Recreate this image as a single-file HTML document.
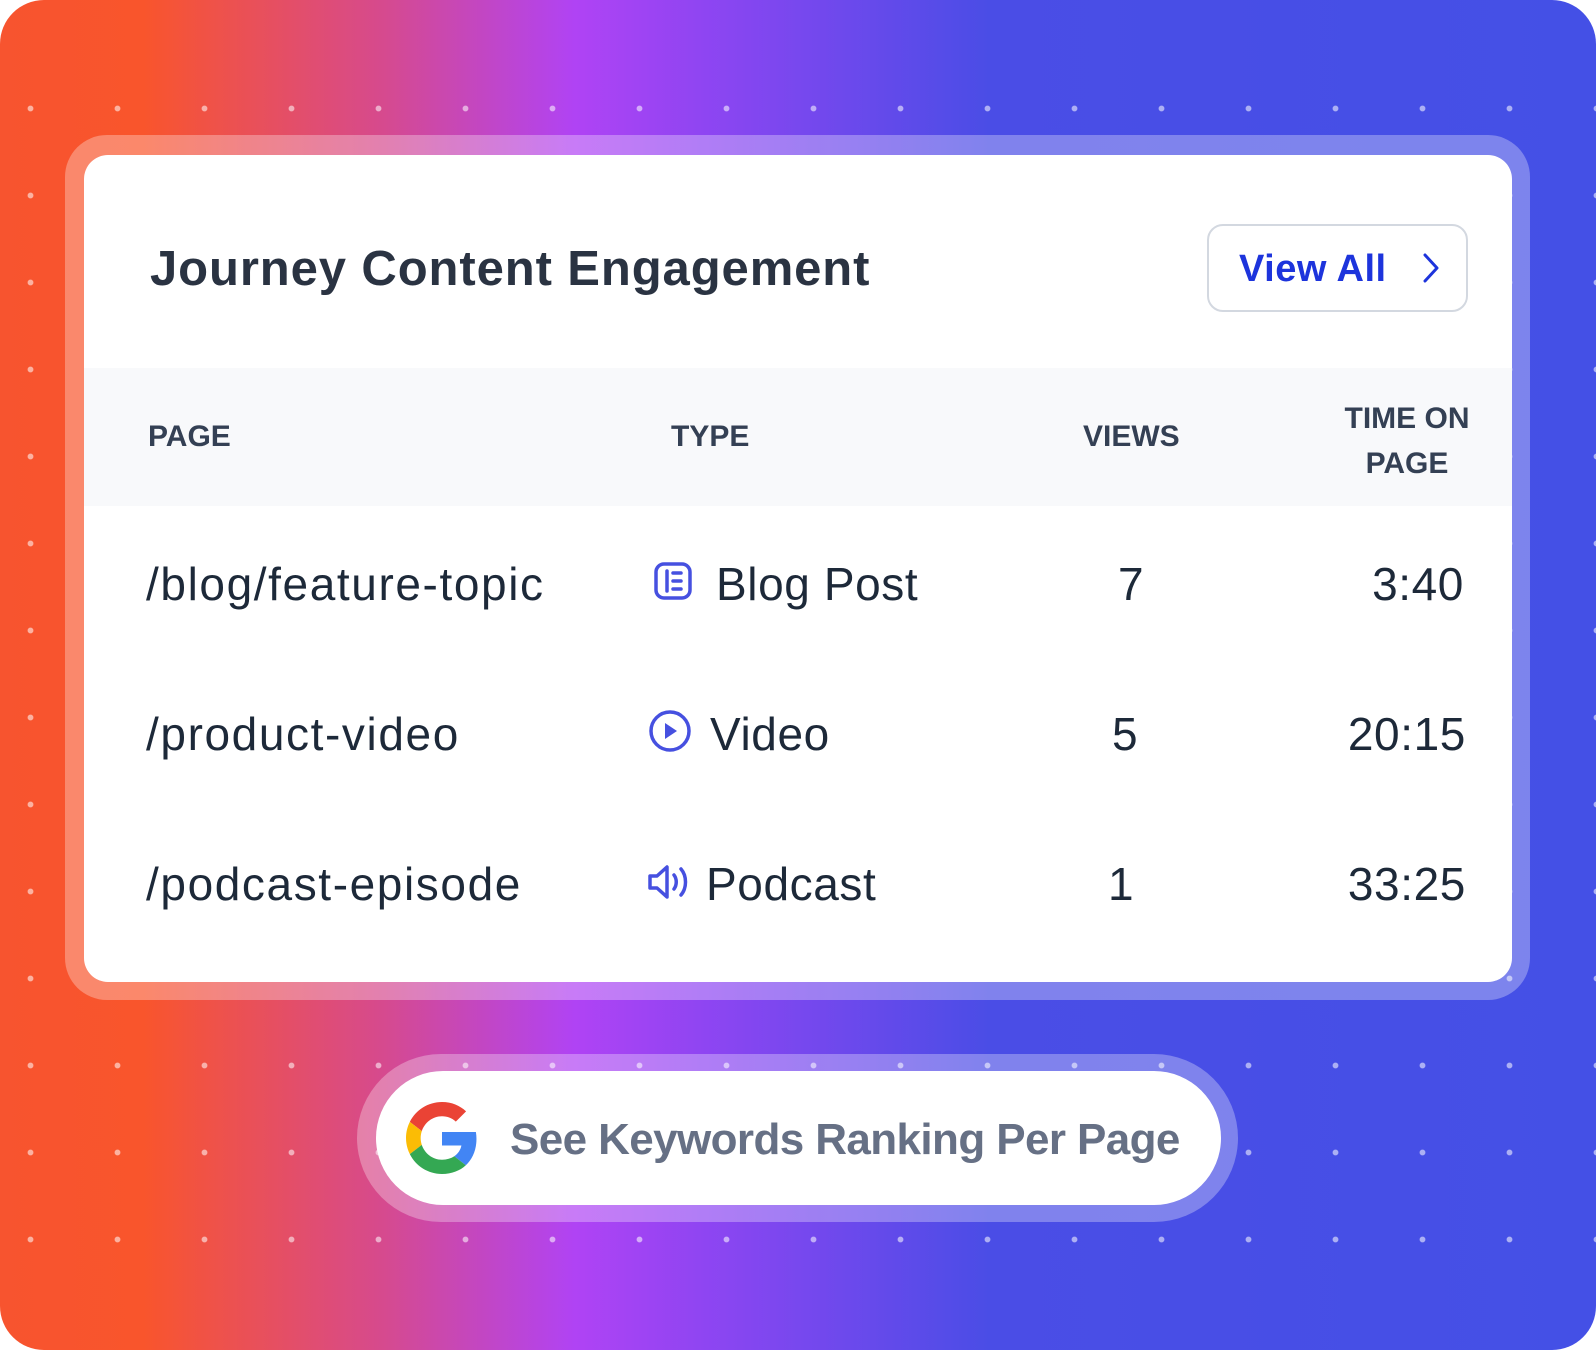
<!DOCTYPE html>
<html><head><meta charset="utf-8"><style>
*{margin:0;padding:0;box-sizing:border-box}
html,body{width:1596px;height:1350px;overflow:hidden;background:#fff}
body{font-family:"Liberation Sans",sans-serif}
.bg{position:absolute;left:0;top:0;width:1596px;height:1350px;border-radius:44px;overflow:hidden;
background:linear-gradient(90deg,#f7542f 0%,#f9552c 9%,#d64a8e 24%,#b043f4 36%,#8f45f2 44%,#4a4de6 62%,#4450e6 100%)}
.dots{position:absolute;left:0;top:95px;width:100%;height:1170px;
background-image:radial-gradient(circle,rgba(255,255,255,.55) 2.6px,transparent 3.2px);
background-size:87px 87px;background-position:-13px -30px}
.glass{position:absolute;left:65px;top:135px;width:1465px;height:865px;border-radius:42px;background:rgba(255,255,255,.3)}
.card{position:absolute;left:84px;top:155px;width:1428px;height:827px;border-radius:24px;background:#fff;overflow:hidden}
.title{position:absolute;left:66px;top:86px;font-size:49px;font-weight:bold;color:#2a3342;letter-spacing:0.9px}
.btn{position:absolute;left:1123px;top:69px;width:261px;height:88px;border:2px solid #d3d8e0;border-radius:16px;color:#1d34dc;font-size:38px;font-weight:bold}
.btn span{position:absolute;left:30px;top:22px;letter-spacing:0.5px}
.btn svg{position:absolute;left:212px;top:26px}
.head{position:absolute;left:0;top:213px;width:100%;height:138px;background:#f8f9fb;color:#344054;font-size:30px;font-weight:bold}
.head div{position:absolute}
.row{position:absolute;left:0;width:100%;font-size:46px;color:#1d2939;letter-spacing:0.6px}
.row div{position:absolute;top:0}
.row .p{letter-spacing:1.6px}
.row svg{position:absolute}
.pillo{position:absolute;left:357px;top:1054px;width:881px;height:168px;border-radius:84px;background:rgba(255,255,255,.3)}
.pill{position:absolute;left:376px;top:1071px;width:845px;height:134px;border-radius:67px;background:#fff}
.pill span{position:absolute;left:134px;top:44px;font-size:44px;font-weight:bold;color:#667085;letter-spacing:-0.6px}
</style></head><body>
<div class="bg"><div class="dots"></div></div>
<div class="glass"></div>
<div class="card">
 <div class="title">Journey Content Engagement</div>
 <div class="btn"><span>View All</span><svg width="20" height="32" viewBox="0 0 20 32"><path d="M4 3l12 13-12 13" fill="none" stroke="#1d34dc" stroke-width="3" stroke-linecap="round" stroke-linejoin="round"/></svg></div>
 <div class="head">
  <div style="left:64px;top:52px">PAGE</div>
  <div style="left:587px;top:52px">TYPE</div>
  <div style="left:999px;top:52px">VIEWS</div>
  <div style="left:1258px;top:28px;text-align:center;width:130px;line-height:45px">TIME ON<br>PAGE</div>
 </div>
 <div class="row" style="top:402px">
  <div class="p" style="left:62px">/blog/feature-topic</div>
  <svg style="left:569px;top:4px" width="40" height="40" viewBox="0 0 40 40"><rect x="3" y="3" width="34" height="34" rx="8" fill="none" stroke="#4650e0" stroke-width="3.5"/><path d="M14 10v20M20 12h8M20 20h8M20 28h8" stroke="#4650e0" stroke-width="3.5" stroke-linecap="round"/></svg>
  <div style="left:632px">Blog Post</div>
  <div style="left:1034px">7</div>
  <div style="right:48px">3:40</div>
 </div>
 <div class="row" style="top:552px">
  <div class="p" style="left:62px">/product-video</div>
  <svg style="left:564px;top:2px" width="44" height="44" viewBox="0 0 44 44"><circle cx="22" cy="22" r="19" fill="none" stroke="#4650e0" stroke-width="3.5"/><path d="M17 14l12 8-12 8z" fill="#4650e0"/></svg>
  <div style="left:626px">Video</div>
  <div style="left:1028px">5</div>
  <div style="right:46px">20:15</div>
 </div>
 <div class="row" style="top:702px">
  <div class="p" style="left:62px">/podcast-episode</div>
  <svg style="left:562px;top:6px" width="46" height="38" viewBox="0 0 46 38"><path d="M4 13h7l10-9v30l-10-9H4z" fill="none" stroke="#4650e0" stroke-width="3.5" stroke-linejoin="round"/><path d="M28 12c3 4 3 10 0 14M35 6c6 7 6 19 0 26" fill="none" stroke="#4650e0" stroke-width="3.5" stroke-linecap="round"/></svg>
  <div style="left:622px">Podcast</div>
  <div style="left:1024px">1</div>
  <div style="right:46px">33:25</div>
 </div>
</div>
<div class="pillo"></div>
<div class="pill">
 <svg style="position:absolute;left:30px;top:31px" width="72" height="72" viewBox="0 0 48 48"><path fill="#EA4335" d="M24 9.5c3.54 0 6.71 1.22 9.21 3.6l6.85-6.85C35.9 2.38 30.47 0 24 0 14.62 0 6.51 5.38 2.560 13.22l7.98 6.19C12.43 13.72 17.74 9.5 24 9.5z"/><path fill="#4285F4" d="M46.98 24.55c0-1.57-.15-3.09-.38-4.55H24v9.02h12.94c-.58 2.96-2.26 5.48-4.78 7.18l7.73 6c4.51-4.18 7.09-10.36 7.09-17.65z"/><path fill="#FBBC05" d="M10.53 28.59c-.48-1.450-.76-2.99-.76-4.59s.27-3.14.76-4.59l-7.98-6.19C.92 16.46 0 20.12 0 24c0 3.88.92 7.54 2.56 10.78l7.97-6.19z"/><path fill="#34A853" d="M24 48c6.48 0 11.93-2.13 15.89-5.81l-7.73-6c-2.15 1.45-4.92 2.3-8.16 2.3-6.26 0-11.57-4.22-13.470-9.91l-7.98 6.19C6.51 42.62 14.62 48 24 48z"/></svg>
 <span>See Keywords Ranking Per Page</span>
</div>
</body></html>
